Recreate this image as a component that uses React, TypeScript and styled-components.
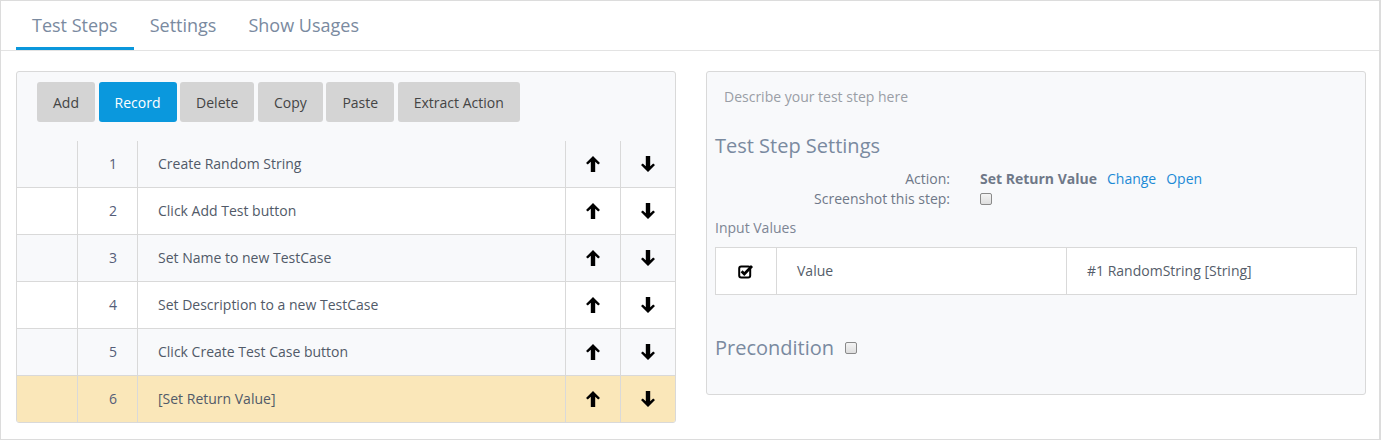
import React from "react";
import styled, { createGlobalStyle } from "styled-components";

const Global = createGlobalStyle`
  html, body { margin: 0; padding: 0; background: #fff; }
  body { font-family: "Open Sans", "Noto Sans", sans-serif; font-size: 14px; color: #555c66; }
  * { box-sizing: border-box; }
`;

const Frame = styled.div`
  width: 1381px;
  height: 440px;
  border: 1px solid #dcdcdc;
  border-right-width: 2px;
  background: #fff;
`;

const TabBar = styled.div`
  display: flex;
  padding-left: 15px;
  border-bottom: 1px solid #e3e3e3;
  height: 50px;
`;

const Tab = styled.div<{ $active?: boolean }>`
  padding: 11px 16px 0;
  font-size: 18px;
  line-height: 26px;
  color: #7a8aa0;
  border-bottom: 3px solid ${(p) => (p.$active ? "#0b97dc" : "transparent")};
  height: 49px;
`;

const Content = styled.div`
  display: grid;
  grid-template-columns: 660px 660px;
  column-gap: 30px;
  padding: 20px 15px 0;
  align-items: start;
`;

const Panel = styled.div`
  background: #f8f9fb;
  border: 1px solid #d9d9d9;
  border-radius: 3px;
  overflow: hidden;
`;

const Toolbar = styled.div`
  display: flex;
  gap: 3.6px;
  padding: 10px 20px 19px;
`;

const Button = styled.div<{ $primary?: boolean }>`
  height: 40px;
  padding: 0 16px;
  display: flex;
  align-items: center;
  border-radius: 3px;
  font-size: 14px;
  background: ${(p) => (p.$primary ? "#0a98dd" : "#d4d4d4")};
  color: ${(p) => (p.$primary ? "#fff" : "#444")};
`;

const Row = styled.div<{ $tone: "gray" | "white" | "yellow"; $last?: boolean }>`
  display: grid;
  grid-template-columns: 61px 60px 428px 55px 1fr;
  height: ${(p) => (p.$last ? 46 : 47)}px;
  border-bottom: ${(p) => (p.$last ? "none" : "1px solid #d9d9d9")};
  background: ${(p) =>
    p.$tone === "yellow" ? "#fae7b9" : p.$tone === "white" ? "#fff" : "#f8f9fb"};
`;

const Cell = styled.div<{ $align?: "left" | "right" | "center"; $noBorder?: boolean }>`
  display: flex;
  align-items: center;
  justify-content: ${(p) =>
    p.$align === "right" ? "flex-end" : p.$align === "center" ? "center" : "flex-start"};
  padding: ${(p) =>
    p.$align === "right" ? "0 20px 2px 0" : p.$align === "center" ? "0" : "0 0 2px 20px"};
  border-right: ${(p) => (p.$noBorder ? "none" : "1px solid #d9d9d9")};
  font-size: 14px;
  color: #515a68;
`;

const NumCell = styled(Cell)`
  color: #555d78;
`;

const RightPanel = styled(Panel)`
  padding: 8px 8px 32px;
`;

const Description = styled.div`
  padding: 7px 9px 0;
  line-height: 20px;
  font-size: 14px;
  color: #9a9ea6;
`;

const Heading = styled.div<{ $mt: number }>`
  margin-top: ${(p) => p.$mt}px;
  font-size: 20px;
  line-height: 28px;
  color: #7a8aa0;
  display: flex;
  align-items: center;
  gap: 11px;
`;

const SettingsGrid = styled.div`
  margin-top: 9px;
  display: grid;
  grid-template-columns: 235px 1fr;
  column-gap: 30px;
  line-height: 20px;
  font-size: 14px;
`;

const Label = styled.div`
  text-align: right;
  color: #6f7888;
`;

const Value = styled.div`
  display: flex;
  align-items: center;
  gap: 10px;
  color: #6f7888;
`;

const Strong = styled.span`
  font-weight: 700;
`;

const Link = styled.span`
  color: #1c8ad6;
`;

const Checkbox = styled.span`
  display: inline-block;
  width: 12px;
  height: 12px;
  border: 1px solid #8a8a8a;
  border-radius: 2px;
  background: linear-gradient(#f4f4f4, #dedede);
`;

const SubLabel = styled.div`
  margin-top: 9px;
  line-height: 20px;
  font-size: 14px;
  color: #7d8594;
`;

const InputTable = styled.div`
  margin-top: 9px;
  display: grid;
  grid-template-columns: 61px 290px 1fr;
  height: 48px;
  border: 1px solid #d9d9d9;
  background: #fff;
`;

const InputCell = styled(Cell)`
  color: #555d6a;
`;

const ArrowIcon = ({ down }: { down?: boolean }) => (
  <svg width="14" height="16" viewBox="0 0 14 16" style={down ? { transform: "rotate(180deg)" } : undefined}>
    <path d="M7 0 L14 7 L12.2 8.6 L9.2 5.8 L9.2 16 L4.8 16 L4.8 5.8 L1.8 8.6 L0 7 Z" fill="#000" />
  </svg>
);

const CheckSquare = () => (
  <svg width="16" height="15" viewBox="0 0 16 15">
    <rect x="1.2" y="2.5" width="11" height="11" rx="2" fill="none" stroke="#000" strokeWidth="2" />
    <path d="M3.6 7.2 L6.3 10 L14 2" fill="none" stroke="#000" strokeWidth="2.8" />
  </svg>
);

const steps = [
  "Create Random String",
  "Click Add Test button",
  "Set Name to new TestCase",
  "Set Description to a new TestCase",
  "Click Create Test Case button",
  "[Set Return Value]",
];

export default function App() {
  return (
    <Frame>
      <Global />
      <TabBar>
        <Tab $active>Test Steps</Tab>
        <Tab>Settings</Tab>
        <Tab>Show Usages</Tab>
      </TabBar>
      <Content>
        <Panel>
          <Toolbar>
            <Button>Add</Button>
            <Button $primary>Record</Button>
            <Button>Delete</Button>
            <Button>Copy</Button>
            <Button>Paste</Button>
            <Button>Extract Action</Button>
          </Toolbar>
          {steps.map((s, i) => {
            const tone = i === 5 ? "yellow" : i % 2 === 0 ? "gray" : "white";
            return (
              <Row key={i} $tone={tone} $last={i === 5}>
                <Cell />
                <NumCell $align="right">{i + 1}</NumCell>
                <Cell>{s}</Cell>
                <Cell $align="center">
                  <ArrowIcon />
                </Cell>
                <Cell $align="center" $noBorder>
                  <ArrowIcon down />
                </Cell>
              </Row>
            );
          })}
        </Panel>
        <RightPanel>
          <Description>Describe your test step here</Description>
          <Heading $mt={25}>Test Step Settings</Heading>
          <SettingsGrid>
            <Label>Action:</Label>
            <Value>
              <Strong>Set Return Value</Strong>
              <Link>Change</Link>
              <Link>Open</Link>
            </Value>
            <Label>Screenshot this step:</Label>
            <Value>
              <Checkbox />
            </Value>
          </SettingsGrid>
          <SubLabel>Input Values</SubLabel>
          <InputTable>
            <InputCell $align="center">
              <CheckSquare />
            </InputCell>
            <InputCell>Value</InputCell>
            <InputCell $noBorder>#1 RandomString [String]</InputCell>
          </InputTable>
          <Heading $mt={39}>
            Precondition <Checkbox />
          </Heading>
        </RightPanel>
      </Content>
    </Frame>
  );
}
